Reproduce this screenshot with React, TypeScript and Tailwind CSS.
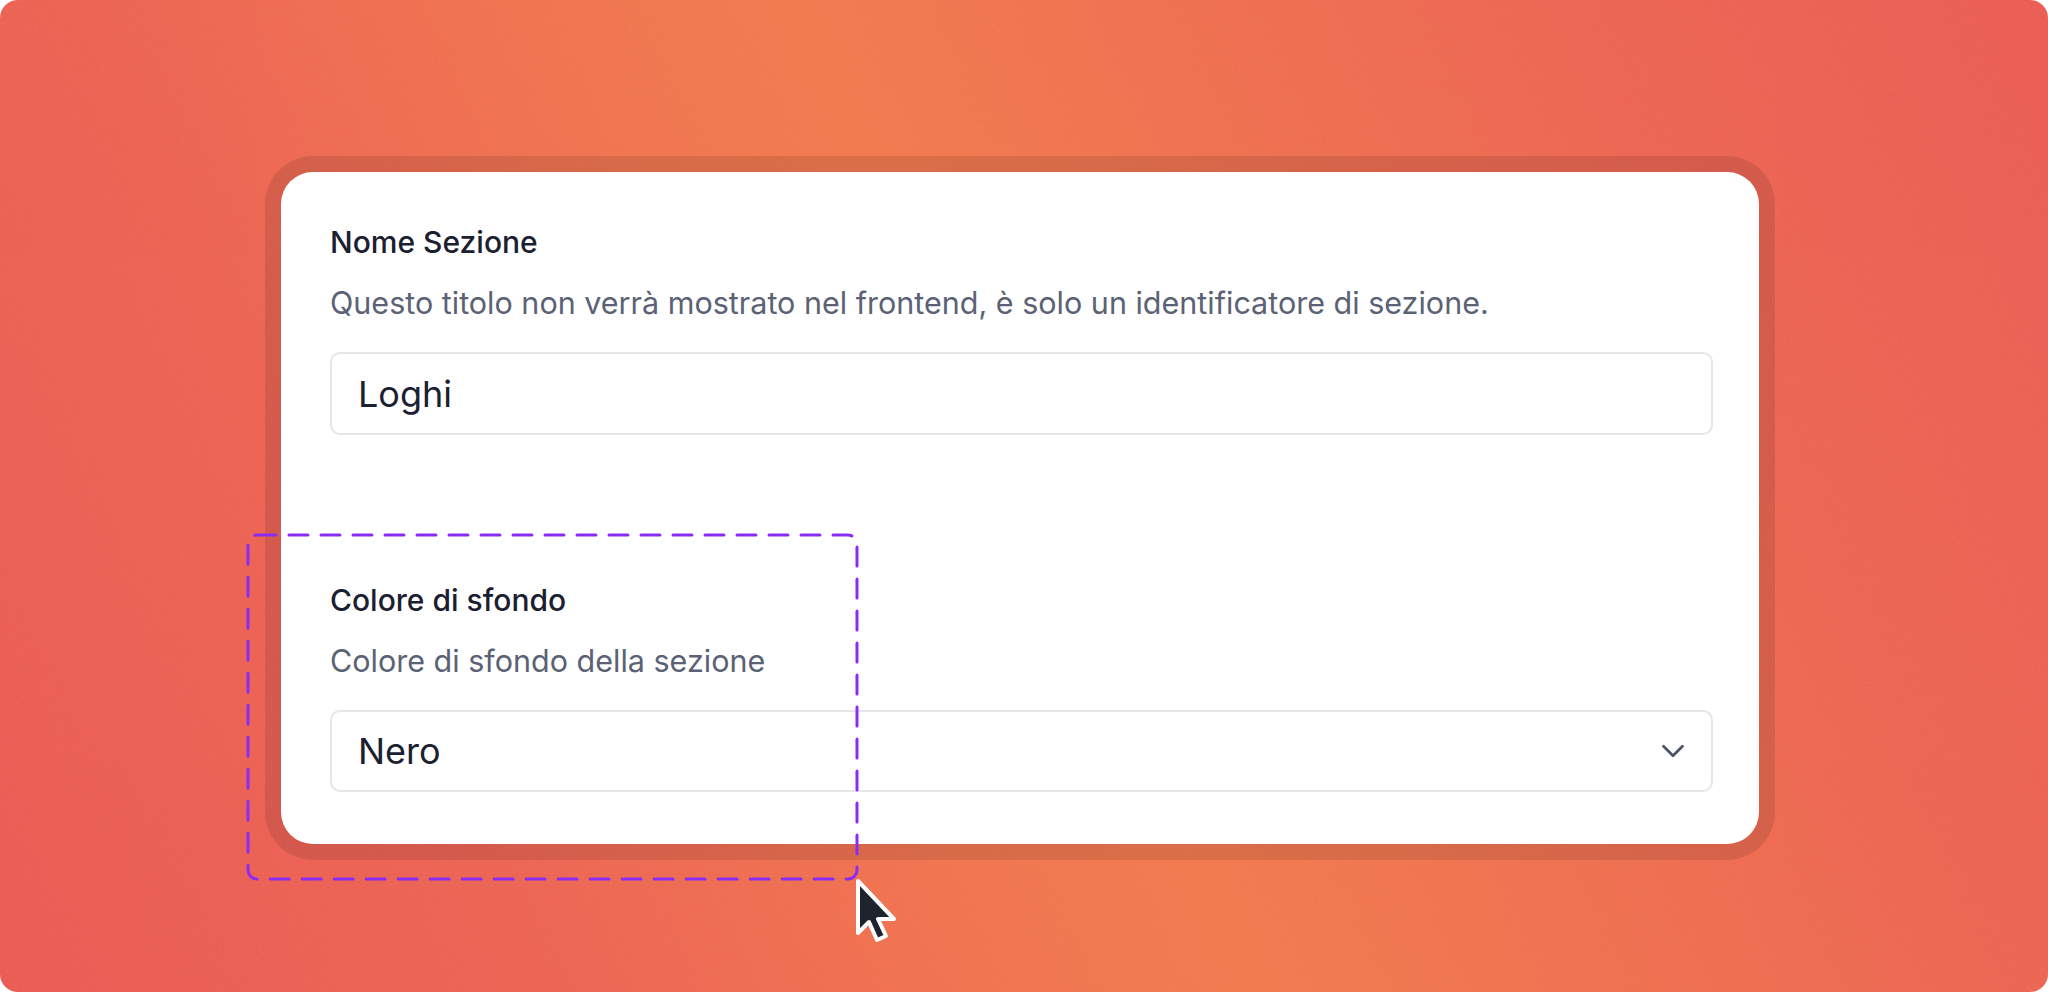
import { ChevronDown } from "lucide-react"

const Field = ({ label, hint, children }: { label: string; hint: string; children: React.ReactNode }) => {
    return (
        <div className="flex flex-col">
            <div className="text-[30px] leading-[45px] font-medium text-[#1b2030]">{label}</div>
            <div className="mt-[15px] text-[30.5px] leading-[45px] text-[#5b6275]">{hint}</div>
            <div className="mt-[27px]">{children}</div>
        </div>
    )
}

const Cursor = () => (
    <svg
        className="absolute left-[853px] top-[876px] pointer-events-none"
        width="48"
        height="72"
        viewBox="0 0 48 72">
        <path
            d="M5 5 L5 57 L16 46 L24 64 L33 60 L25 43 L41 43 Z"
            fill="#1f232e"
            stroke="#ffffff"
            strokeWidth="4"
            strokeLinejoin="round"
        />
    </svg>
)

export default function App() {
    return (
        <div className="min-h-screen bg-white font-['Inter','Noto_Sans',sans-serif]">
            <div className="relative w-[2048px] h-[992px] overflow-hidden rounded-[18px] bg-[linear-gradient(65deg,#ed5851_0%,#f0614f_22%,#f4724b_40%,#f6784a_50%,#f3704b_62%,#f0634e_80%,#ee5a51_100%)] pt-[156px] pl-[265px]">
                {/* grain */}
                <svg className="absolute inset-0 w-full h-full opacity-[0.12] pointer-events-none">
                    <filter id="grain">
                        <feTurbulence type="fractalNoise" baseFrequency="0.9" numOctaves="2" stitchTiles="stitch" />
                        <feColorMatrix type="saturate" values="0" />
                    </filter>
                    <rect width="100%" height="100%" filter="url(#grain)" />
                </svg>

                <div className="relative w-[1510px] rounded-[48px] bg-black/10 p-4">
                    <div className="rounded-[32px] bg-white pl-[49px] pr-[46px] pt-12 pb-[52px]">
                        <Field
                            label="Nome Sezione"
                            hint="Questo titolo non verrà mostrato nel frontend, è solo un identificatore di sezione.">
                            <div className="flex items-center h-[83px] rounded-[10px] border-2 border-[#e5e5ea] pl-[26px] text-[36px] text-[#1b2030]">
                                Loghi
                            </div>
                        </Field>

                        <div className="mt-[143px]">
                            <Field
                                label="Colore di sfondo"
                                hint="Colore di sfondo della sezione">
                                <div className="flex items-center justify-between h-[82px] rounded-[10px] border-2 border-[#e5e5ea] pl-[26px] pr-[19px] text-[36px] text-[#1b2030]">
                                    <span>Nero</span>
                                    <ChevronDown size={38} strokeWidth={1.7} color="#4b5264" />
                                </div>
                            </Field>
                        </div>
                    </div>
                </div>

                {/* selection outline */}
                <svg
                    className="absolute left-[246px] top-[533px] pointer-events-none"
                    width="613"
                    height="348">
                    <rect
                        x="2"
                        y="2"
                        width="609"
                        height="344"
                        rx="9"
                        fill="none"
                        stroke="#8b2cf5"
                        strokeWidth="3"
                        strokeDasharray="19 13"
                        strokeLinecap="round"
                    />
                </svg>

                <Cursor />
            </div>
        </div>
    )
}
